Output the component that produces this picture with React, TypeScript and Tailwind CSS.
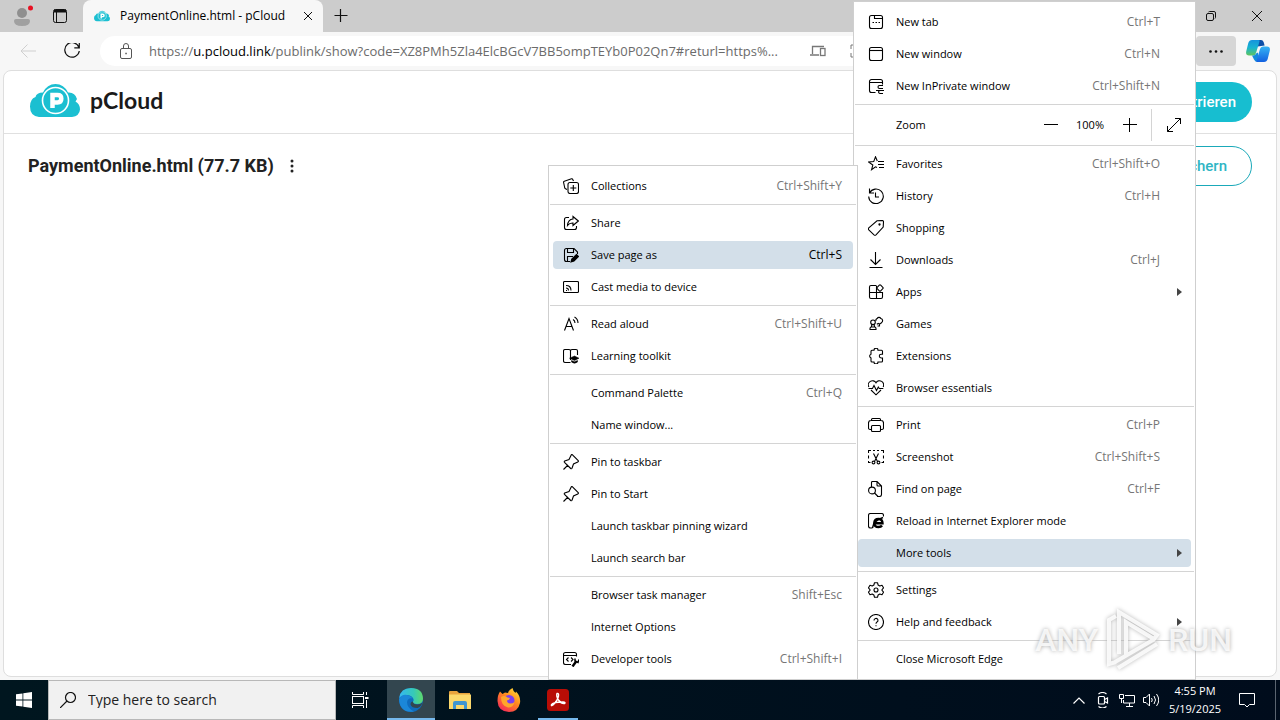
import type { ReactNode } from "react";

const ICONS: Record<string, ReactNode> = {
  newTab: (
    <>
      <rect x="1.5" y="1.5" width="13" height="13" rx="2" />
      <path d="M6.5 2v2.5h8M4.5 8.5h1.5M7.5 8.5h1.5M10.5 8.5h1.5" />
    </>
  ),
  newWindow: (
    <>
      <rect x="1.5" y="1.5" width="13" height="13" rx="2" />
      <path d="M2 4.5h12" />
    </>
  ),
  inPrivate: (
    <>
      <path d="M7.5 14.5h-4a2 2 0 0 1-2-2v-9a2 2 0 0 1 2-2h9a2 2 0 0 1 2 2v3M2 4.5h12" />
      <path d="M15 7.5h-3.500q-1.500 0-1.500 1.500t1.500 1.500H15M8 12.500h8M16 12.500h-3.500q-2 0-2 1.500t2 1.500H15" />
    </>
  ),
  favorites: (
    <>
      <path d="M9 11.500 7.500 10.800 3.600 13.700 4.800 9.100 .5 6l5.200-.4L7.500 .8 9.300 5" />
      <path d="M10 5.500h6M10 8.500h6M11 11.500h5" />
    </>
  ),
  history: (
    <path d="M1.500.5v4.500h4.500M1.500 5A7.300 7.300 0 1 1 .7 8.500M7.500 4.500v4.500H11" />
  ),
  shopping: (
    <>
      <path d="M9 .8 14.200.500q1.300 0 1.300 1.300l-.3 5.200L8 14.800q-1 .9-2 0L.8 9.800q-.9-1 0-2z" />
      <circle cx="11.500" cy="4.500" r=".6" />
    </>
  ),
  downloads: <path d="M7.500 0v12.500M2.500 7.500l5 5 5-5M1.500 15.500h13" />,
  apps: (
    <>
      <path d="M8 1.500H3q-1.500 0-1.500 1.500v10q0 1.500 1.500 1.500h10q1.500 0 1.500-1.500V8.500h-13M8.500 1.500v13" />
      <rect x="9.500" y="1.500" width="5" height="5" rx="1" fill="#fff" transform="rotate(45 12 4)" />
    </>
  ),
  games: (
    <>
      <circle cx="5" cy="6.300" r="2.300" />
      <path d="M4 8.500 3.300 11M6 8.500 6.700 11M2 13.500v-1q0-1.500 1.500-1.500h3Q8 11 8 12.500v1zM8 5a2 2 0 0 1 1.200-2.500 2 2 0 0 1 3.600 0 2.200 2.200 0 0 1 .5 4.200 2 2 0 0 1-3 .8l-1.500.8M11.500 7.500v2.500H9.500" />
    </>
  ),
  extensions: (
    <path d="M6 2.200a2 2 0 0 1 4 0h3.500q1 0 1 1v3h-1.300a1.900 1.900 0 0 0 0 3.800h1.300v3q0 1-1 1H10a2 2 0 0 1-4 0H4q-1 0-1-1v-3a2 2 0 0 1 0-3.800v-3q0-1 1-1z" />
  ),
  essentials: (
    <>
      <path d="M.9 7A3.900 3.900 0 0 1 8 2.800 3.900 3.900 0 0 1 15.100 7M3 10 8 14.800l5-4.800" />
      <path d="M.5 8.500h4l1.500-3 2.500 5 1.800-3.500 1 1.500h4" />
    </>
  ),
  print: (
    <>
      <path d="M3.500 3.500v-1q0-1 1-1h7q1 0 1 1v1M3.500 12.500H2q-1.500 0-1.500-1.500V6Q.5 3.500 3 3.500h10q2.500 0 2.500 2.500v5q0 1.500-1.500 1.500h-1.500" />
      <rect x="3.500" y="8.500" width="9" height="6" rx="1" />
    </>
  ),
  screenshot: (
    <>
      <path d="M2.500 13.500H.5V12M.5 9.500v-3M.5 4V1.500H3M5 1.500h2M9 1.500h2M13 1.500h2.500V4M15.500 6.500v3M15.500 12v1.500H13.500" />
      <path d="m5.500 4.500 4 8M10.500 4.500l-4 8" />
      <circle cx="5.500" cy="13.500" r="1.400" />
      <circle cx="10.500" cy="13.500" r="1.400" />
    </>
  ),
  find: (
    <>
      <path d="M3.500 6V1.500q0-1 1-1H9l4.500 4.500v8.500q0 2-2 2H9M9 .5V4q0 1 1 1h3.500" />
      <circle cx="4" cy="9.500" r="3.400" />
      <path d="M6.500 12 10 15.500" />
    </>
  ),
  ie: (
    <>
      <path d="M4.500 15H2.500q-2 0-2-2V2.500q0-2 2-2h11q2 0 2 2v1" />
      <path strokeWidth="2.400" d="M6 10.300h8.500q0-4.300-4-4.300t-4.300 4.300q.3 3.700 4.300 3.700 2.500 0 3.500-1.500" />
      <path strokeWidth="1.500" d="M4.500 15Q5 8 15 4.500" />
    </>
  ),
  settings: (
    <>
      <path
        strokeLinejoin="round"
        d="m6.500.7 3 0 .6 2.300 1.700 1 2.200-.7 1.500 2.500L13.800 8l1.700 2.200-1.500 2.500-2.200-.7-1.700 1-.6 2.300h-3l-.6-2.300-1.700-1-2.200.7L.5 10.200 2.200 8 .5 5.800l1.500-2.500 2.200.7 1.700-1z"
      />
      <circle cx="8" cy="8" r="2" />
    </>
  ),
  help: (
    <>
      <circle cx="8" cy="8" r="7.500" />
      <path d="M6 6.500a2 2 0 1 1 3 1.600q-1 .6-1 1.700M8 11.200v1" />
    </>
  ),
  collections: (
    <>
      <path d="M4 11.500 2.500 10.700q-1-.4-.9-1.500L.6 4.500q-.2-1 .7-1.300L8.500.8q1-.2 1.300.7l.7 1.500" />
      <rect x="5" y="4.500" width="10.500" height="11" rx="2" />
      <path d="M10.300 7v6M7.300 10h6" />
    </>
  ),
  share: (
    <>
      <path d="M6 2.500H3.500q-2 0-2 2v8q0 2 2 2h8q2 0 2-2V11" />
      <path d="M10 1.500 15.300 6 10 10.500V8Q6.500 7.800 4.500 10.500 5 4.300 10 4z" />
    </>
  ),
  save: (
    <>
      <path d="M7 14.500H3.500q-2 0-2-2v-9q0-2 2-2H11L14.500 5v2M4.500 2v3.500h6V2M4.500 14V9.500h5.500" />
      <path fill="currentColor" d="m8 15 .8-3L13.500 7.500l2 2L11 14z" />
    </>
  ),
  cast: (
    <>
      <rect x=".5" y="2.500" width="15" height="11" rx="1" />
      <path d="M3 11.500h1M3 9q2.500 0 2.500 2.500M3 6.500q5 0 5 5" />
    </>
  ),
  readAloud: (
    <path d="m1.500 14.500 4.500-12 4.500 12M3 10.500h6M10 3.500q2 1 2 3.500M11.500 1q3.500 2 3.500 6" />
  ),
  learning: (
    <>
      <path d="M7.500 2.500V12M7.500 14.500h-5q-2 0-2-1.500V3q0-1.500 1.500-1.500H6Q7.500 1.500 7.500 3 7.500 1.500 9 1.500h4q1.500 0 1.500 1.500v4" />
      <path fill="currentColor" strokeWidth=".5" d="m6.500 10.200 5-2.200 4.500 2.200-4.500 2.200zM8.500 12.500l3 1.200 3-1.200v1.500q-3 2.500-6 0z" />
    </>
  ),
  pin: (
    <path d="m.5 15.500 4.500-4.500M9.500 .8 15.200 6.500q.6.900-.4 1.400L10.500 10 9 14.300q-.5.800-1.300.2L1.500 8.300q-.6-.8.200-1.300L6 5.500 8.100 1.200q.5-1 1.400-.4z" />
  ),
  devTools: (
    <>
      <path d="M8 13.500H2.500q-2 0-2-2v-8q0-2 2-2h9q2 0 2 2v2M.5 4.500h13M5.500 6.500 3.500 8.500l2 2M8 6.500l2 2-2 2" />
      <path strokeWidth="2.400" d="m9.500 15.500 4-5.500" />
      <path strokeWidth="1.500" d="M12 7.500v2.500l3 1.500 1-3" />
    </>
  ),
};

function Icon({ name }: { name?: string }) {
  return (
    <svg
      viewBox="0 0 16 16"
      className="size-4 shrink-0"
      fill="none"
      stroke="currentColor"
      strokeWidth="1.1"
    >
      {name ? ICONS[name] : null}
    </svg>
  );
}

type Item = {
  label: string;
  icon?: string;
  keys?: string;
  arrow?: boolean;
  active?: boolean;
};

const MAIN_TOP: Item[] = [
  { label: "New tab", icon: "newTab", keys: "Ctrl+T" },
  { label: "New window", icon: "newWindow", keys: "Ctrl+N" },
  { label: "New InPrivate window", icon: "inPrivate", keys: "Ctrl+Shift+N" },
];

const MAIN_GROUPS: Item[][] = [
  [
    { label: "Favorites", icon: "favorites", keys: "Ctrl+Shift+O" },
    { label: "History", icon: "history", keys: "Ctrl+H" },
    { label: "Shopping", icon: "shopping" },
    { label: "Downloads", icon: "downloads", keys: "Ctrl+J" },
    { label: "Apps", icon: "apps", arrow: true },
    { label: "Games", icon: "games" },
    { label: "Extensions", icon: "extensions" },
    { label: "Browser essentials", icon: "essentials" },
  ],
  [
    { label: "Print", icon: "print", keys: "Ctrl+P" },
    { label: "Screenshot", icon: "screenshot", keys: "Ctrl+Shift+S" },
    { label: "Find on page", icon: "find", keys: "Ctrl+F" },
    { label: "Reload in Internet Explorer mode", icon: "ie" },
    { label: "More tools", arrow: true, active: true },
  ],
  [
    { label: "Settings", icon: "settings" },
    { label: "Help and feedback", icon: "help", arrow: true },
  ],
  [{ label: "Close Microsoft Edge" }],
];

const TOOLS_GROUPS: Item[][] = [
  [{ label: "Collections", icon: "collections", keys: "Ctrl+Shift+Y" }],
  [
    { label: "Share", icon: "share" },
    { label: "Save page as", icon: "save", keys: "Ctrl+S", active: true },
    { label: "Cast media to device", icon: "cast" },
  ],
  [
    { label: "Read aloud", icon: "readAloud", keys: "Ctrl+Shift+U" },
    { label: "Learning toolkit", icon: "learning" },
  ],
  [{ label: "Command Palette", keys: "Ctrl+Q" }, { label: "Name window..." }],
  [
    { label: "Pin to taskbar", icon: "pin" },
    { label: "Pin to Start", icon: "pin" },
    { label: "Launch taskbar pinning wizard" },
    { label: "Launch search bar" },
  ],
  [
    { label: "Browser task manager", keys: "Shift+Esc" },
    { label: "Internet Options" },
    { label: "Developer tools", icon: "devTools", keys: "Ctrl+Shift+I" },
  ],
];

function Divider() {
  return <div className="mx-px my-0.5 h-px bg-[#d4d4d4]" />;
}

function MenuRow({ item, wide }: { item: Item; wide?: boolean }) {
  return (
    <div className="px-1 py-0.5">
      <button
        role="menuitem"
        className={`flex h-7 w-full items-center gap-3 rounded-sm pl-2.5 text-left ${
          item.active ? "bg-[#d3dfe9]" : ""
        } ${wide ? "pr-2" : "pr-[11px]"}`}
      >
        <Icon name={item.icon} />
        <span className="flex-1 text-[11px] whitespace-nowrap">{item.label}</span>
        {item.keys && (
          <span className={item.active ? "" : "text-[#767676]"}>{item.keys}</span>
        )}
        {wide && (
          <svg viewBox="0 0 11 8" className="h-2 w-[11px] shrink-0" fill="#444">
            {item.arrow && <path d="M5 0v8l5-4z" />}
          </svg>
        )}
      </button>
    </div>
  );
}

function Groups({ groups, wide }: { groups: Item[][]; wide?: boolean }) {
  return (
    <>
      {groups.map((group, i) => (
        <div key={group[0].label}>
          {i > 0 && <Divider />}
          {group.map((item) => (
            <MenuRow key={item.label} item={item} wide={wide} />
          ))}
        </div>
      ))}
    </>
  );
}

function MainMenu() {
  return (
    <div
      role="menu"
      className="absolute top-px right-[84px] w-[343px] border border-[#cfcfcf] bg-white py-1"
    >
      {MAIN_TOP.map((item) => (
        <MenuRow key={item.label} item={item} wide />
      ))}
      <Divider />
      <div className="flex h-9 items-center pl-[42px] text-[11px]">
        <span className="flex-1">Zoom</span>
        <button aria-label="Zoom out" className="flex w-10 justify-center">
          <svg viewBox="0 0 14 14" className="size-3.5" stroke="#000">
            <path d="M0 6.500h14" />
          </svg>
        </button>
        <span className="w-[38px] text-center">100%</span>
        <button aria-label="Zoom in" className="flex w-[42px] justify-center">
          <svg viewBox="0 0 14 14" className="size-3.5" stroke="#000">
            <path d="M0 6.500h14M6.500 0v14" />
          </svg>
        </button>
        <button
          aria-label="Full screen"
          className="flex h-8 w-11 items-center justify-center border-l border-[#d4d4d4]"
        >
          <svg viewBox="0 0 14 14" className="size-3.5" fill="none" stroke="#000">
            <path d="M.5 13.500 13.500.5M8 .5h5.500V6M.5 8v5.500H6" />
          </svg>
        </button>
      </div>
      <Divider />
      <Groups groups={MAIN_GROUPS} wide />
    </div>
  );
}

function ToolsMenu() {
  return (
    <div
      role="menu"
      className="absolute top-[165px] right-[422px] w-[310px] border border-[#cfcfcf] bg-white py-1"
    >
      <Groups groups={TOOLS_GROUPS} />
    </div>
  );
}

function CloudLogo({ className }: { className: string }) {
  return (
    <svg viewBox="0 0 50 33" className={className} fill="none">
      <path
        fill="#1bbfd1"
        d="M9 33Q0 32 0 22.500 0 15 5.500 13 6.500 8.500 13 8.500 17 0 25.500 0T38 8.500q7-.5 9 6.500l-1.500 2.500Q50 20 50 25.500 49.500 32 42 33z"
      />
      <circle cx="25.500" cy="16.500" r="13" stroke="#fff" strokeWidth="1.600" />
      <path stroke="#fff" strokeWidth="4.500" d="M22.500 24V11h5q3.800 0 3.800 3.700t-3.800 3.700h-5" />
    </svg>
  );
}

function TabStrip() {
  return (
    <div className="flex h-8 items-stretch bg-[#ccc]">
      <div className="flex w-[83px] items-center">
        <button aria-label="Profile" className="flex w-11 justify-center">
          <svg viewBox="0 0 22 22" className="size-[22px]">
            <circle cx="11" cy="8" r="5" fill="#8f8f8f" />
            <path fill="#a0a0a0" d="M3 16q0-2 2-2h12q2 0 2 2 0 5-8 5t-8-5z" />
            <circle cx="19.500" cy="3" r="2.500" fill="#e81123" />
          </svg>
        </button>
        <button aria-label="Tab actions" className="flex w-8 justify-center">
          <svg viewBox="0 0 14 14" className="size-3.5" fill="none" stroke="#111">
            <rect x=".5" y=".5" width="13" height="13" rx="2" />
            <path strokeWidth="3" d="M1 2h12" />
            <path d="M3.500 2v11" />
          </svg>
        </button>
      </div>
      <div className="flex w-60 items-center gap-2.5 rounded-t-lg bg-[#f7f7f7] pr-2.5 pl-[11px]">
        <CloudLogo className="h-3 w-4" />
        <span className="flex-1 whitespace-nowrap">PaymentOnline.html - pCloud</span>
        <button aria-label="Close tab">
          <svg viewBox="0 0 10 10" className="size-2.5" stroke="#111">
            <path d="m1 1 8 8M9 1 1 9" />
          </svg>
        </button>
      </div>
      <button aria-label="New tab" className="flex w-9 items-center justify-center">
        <svg viewBox="0 0 14 14" className="size-3.5" stroke="#111" strokeWidth="1.200">
          <path d="M.5 6.500h13M6.500 0v13" />
        </svg>
      </button>
      <div className="flex-1" />
      <button aria-label="Restore" className="flex w-[46px] items-center justify-center">
        <svg viewBox="0 0 10 10" className="size-2.5" fill="none" stroke="#111">
          <rect x=".5" y="2.500" width="7" height="7" rx="1.500" />
          <path d="M2.500 1q.5-.5 1-.5H8q1.500 0 1.500 1.500v4.500q0 .5-.5 1" />
        </svg>
      </button>
      <button aria-label="Close window" className="flex w-[46px] items-center justify-center">
        <svg viewBox="0 0 10 10" className="size-2.5" stroke="#111">
          <path d="m0 0 10 10M10 0 0 10" />
        </svg>
      </button>
    </div>
  );
}

function Toolbar() {
  return (
    <div className="flex h-[38px] items-center">
      <button aria-label="Back" className="flex w-14 justify-center">
        <svg viewBox="0 0 16 14" className="h-3.5 w-4" fill="none" stroke="#cfcfcf">
          <path d="M16 7H1M7.500.5 1 7l6.500 6.500" />
        </svg>
      </button>
      <button aria-label="Refresh" className="flex w-8 justify-center">
        <svg viewBox="0 0 16 16" className="size-4" fill="none" stroke="#111" strokeWidth="1.200">
          <path d="M15 4.500A7.300 7.300 0 1 0 15.300 8M15.300 0v4.800h-5" />
        </svg>
      </button>
      <div className="ml-3 flex h-[30px] flex-1 items-center rounded-full bg-white pl-[19px]">
        <svg viewBox="0 0 14 16" className="h-4 w-3.5" fill="none" stroke="#555">
          <rect x="1.500" y="5.500" width="11" height="10" rx="1.500" />
          <path d="M4.500 5.500V3q0-2.500 2.500-2.500T9.500 3v2.500" />
          <path strokeWidth="1.500" d="M6.300 10.500h1.500" />
        </svg>
        <div className="relative ml-4 flex h-full w-[661px] items-center">
          <input id="address" type="text" className="h-full w-full bg-transparent outline-none" />
          <label
            htmlFor="address"
            className="absolute left-0 cursor-text text-[13px] whitespace-nowrap text-[#6b6b6b]"
          >
            https://<span className="text-black">u.pcloud.link</span>
            /publink/show?code=XZ8PMh5Zla4ElcBGcV7BB5ompTEYb0P02Qn7#returl=https%...
          </label>
        </div>
        <svg viewBox="0 0 16 12" className="h-3 w-4" fill="none" stroke="#777" strokeWidth="1.300">
          <path d="M2.500 9V1.500H14M0 10h9" />
          <rect x="10.500" y="3.500" width="4.500" height="7" />
        </svg>
        <svg viewBox="0 0 14 14" className="ml-6 size-3.5" fill="none" stroke="#777">
          <path d="M1 5V1h4M9 1h4v4M1 9v4h4M9 13h4V9" />
        </svg>
      </div>
      <div className="flex w-[84px] items-center">
        <button
          aria-label="Settings and more"
          className="flex h-[30px] w-10 items-center justify-center rounded-sm bg-[#d6d6d6]"
        >
          <svg viewBox="0 0 14 3" className="h-[3px] w-3.5" fill="#111">
            <circle cx="1.500" cy="1.500" r="1.300" />
            <circle cx="7" cy="1.500" r="1.300" />
            <circle cx="12.500" cy="1.500" r="1.300" />
          </svg>
        </button>
        <button aria-label="Copilot" className="flex w-11 justify-center">
          <svg viewBox="0 0 24 22" className="h-[22px] w-6">
            <defs>
              <linearGradient id="cpA" x1="0" y1="0" x2="0" y2="1">
                <stop offset="0" stopColor="#1593dd" />
                <stop offset=".5" stopColor="#18b4d0" />
                <stop offset="1" stopColor="#5fc55e" />
              </linearGradient>
              <linearGradient id="cpB" x1="0" y1="0" x2="0" y2="1">
                <stop offset="0" stopColor="#35b4f4" />
                <stop offset="1" stopColor="#1260e0" />
              </linearGradient>
            </defs>
            <path fill="#0c4fa8" d="M9 0h6q2 0 2.600 2l1 3.500-7 1z" />
            <path fill="url(#cpA)" d="M6 0h6.500q1.500 0 1 1.500L10 13q-.7 2.500-3 2.500H3q-3.500 0-2.800-4L2.300 3Q3.200 0 6 0z" />
            <path fill="#148bdc" d="M6 15.500h1q2.500 0 3-2l2-1v9.500q-3 0-4-2.500z" />
            <path fill="url(#cpB)" d="M18 22h-6.500q-1.500 0-1-1.500L14 9q.7-2.500 3-2.500h4q3.500 0 2.800 4L21.700 19q-.9 3-3.700 3z" />
          </svg>
        </button>
      </div>
    </div>
  );
}

function SharedPage() {
  return (
    <main className="mx-[3px] mb-[3px] flex-1 rounded-lg border border-[#dedede] bg-white font-[Roboto,sans-serif]">
      <header className="flex h-[63px] items-center justify-between border-b border-[#e0e0e0] px-6">
        <a href="#" className="flex items-center gap-2.5 pb-1 pl-0.5">
          <CloudLogo className="h-[33px] w-[50px]" />
          <span className="font-[Lato,sans-serif] text-[23px] font-bold text-[#1a1a1a]">
            pCloud
          </span>
        </a>
        <button className="h-10 rounded-full bg-[#17bed0] px-4 text-[15px] font-medium text-white">
          Registrieren
        </button>
      </header>
      <div className="flex items-start justify-between px-6 pt-3">
        <div className="flex h-10 items-center gap-4">
          <h1 className="text-[18px] font-bold text-[#222]">PaymentOnline.html (77.7 KB)</h1>
          <button aria-label="More options">
            <svg viewBox="0 0 4 14" className="h-3.5 w-1" fill="#222">
              <circle cx="2" cy="2" r="1.500" />
              <circle cx="2" cy="7" r="1.500" />
              <circle cx="2" cy="12" r="1.500" />
            </svg>
          </button>
        </div>
        <button className="h-10 rounded-full border border-[#1aa9b9] px-6 text-[15px] font-medium text-[#2fb5c4]">
          Speichern
        </button>
      </div>
    </main>
  );
}

function Taskbar() {
  return (
    <footer className="flex h-10 shrink-0 items-stretch bg-linear-to-r from-[#00161f] to-[#000c1c] text-white">
      <button aria-label="Start" className="flex w-12 items-center justify-center">
        <svg viewBox="0 0 16 16" className="size-4" fill="#fff">
          <path d="M0 2.300 6.500 1.400v6.200H0zM7.300 1.300 16 0v7.600H7.300zM0 8.400h6.500v6.200L0 13.700zM7.300 8.400H16V16l-8.700-1.300z" />
        </svg>
      </button>
      <div className="flex w-72 items-center gap-3 border border-[#b8b8b8] bg-[#f1f1f1] pl-[11px]">
        <svg viewBox="0 0 16 16" className="size-4" fill="none" stroke="#111" strokeWidth="1.200">
          <circle cx="10.500" cy="5.500" r="5" />
          <path d="M7 9 0 16" />
        </svg>
        <input
          type="text"
          aria-label="Search"
          placeholder="Type here to search"
          className="min-w-0 flex-1 text-[14px] outline-none placeholder:text-[#222]"
        />
      </div>
      <button aria-label="Task view" className="flex w-[51px] items-center justify-center pr-0.5">
        <svg viewBox="0 0 17 16" className="h-4 w-[17px]" fill="none" stroke="#fff">
          <path d="M.5 0v2.500h11V0M.5 16v-2.500h11V16M14.500 0v3M14.500 8v8" />
          <rect x=".5" y="4.500" width="11" height="7" />
          <path strokeWidth="2" d="M13 6h3.500" />
        </svg>
      </button>
      <button
        aria-label="Microsoft Edge"
        className="flex w-12 items-center justify-center border-b-2 border-[#76b9ed] bg-[#33464f] pt-0.5"
      >
        <svg viewBox="0 0 24 24" className="size-6">
          <defs>
            <linearGradient id="edgeA" x1="0" y1="0" x2="1" y2="0">
              <stop offset="0" stopColor="#35b8f1" />
              <stop offset=".6" stopColor="#36c9b8" />
              <stop offset="1" stopColor="#5fd96a" />
            </linearGradient>
          </defs>
          <circle cx="12" cy="12" r="12" fill="#0f6cbd" />
          <path
            fill="url(#edgeA)"
            d="M.2 10Q1.500 0 12 0q11.500 0 12 10.500 0 5.500-6 5.500-5 0-4-2.500 1-1 .5-2.500Q13 7.500 8.500 7 3 7 .2 10z"
          />
          <path fill="#1b87d8" d="M.1 11Q3 6 8 7q4 .5 5.500 3.500Q9 9.500 8 14q0 6 7 9.500-14 2-15-12.500z" />
          <path fill="#33464f" d="M14 13.500q0 3 4.500 3 3 0 5-2-1.500 4.500-5 5.500-6 0-7-3.500 0-3 2.500-3z" />
        </svg>
      </button>
      <button aria-label="File Explorer" className="flex w-[49px] items-center justify-center">
        <svg viewBox="0 0 22 18" className="h-[18px] w-[22px]">
          <path fill="#e8a33d" d="M0 1q0-1 1-1h7l2 2h11v4H0z" />
          <path fill="#fbd86c" d="M0 3.500h22V18H0z" />
          <path fill="#3f96d2" d="M4 18v-6q0-2 2-2h10q2 0 2 2v6h-3v-4H7v4z" />
        </svg>
      </button>
      <button aria-label="Firefox" className="flex w-[49px] items-center justify-center">
        <svg viewBox="0 0 24 24" className="size-6">
          <defs>
            <linearGradient id="ffA" x1=".9" y1="0" x2=".2" y2="1">
              <stop offset="0" stopColor="#ffe43a" />
              <stop offset=".45" stopColor="#ff8a1f" />
              <stop offset="1" stopColor="#f5245b" />
            </linearGradient>
          </defs>
          <path
            fill="url(#ffA)"
            d="M3 3.500 5.500 6 8 4.500l3 .5q1-3.500 4.500-5 .5 3 3 5l.5-1.500q5 5 4 11.500-2 9-11 9Q1 23.500.5 13 .5 7 3 3.500z"
          />
          <circle cx="12" cy="12.500" r="5.500" fill="#7a3ff0" />
          <path fill="#ffa62b" d="M4 9q3.500-2 6.500.5l2.500.5q-.5 2-3 2.500 0 2.500 3 3 3 0 4.500-1.500-1 5.500-6.500 5.500Q4 18 4 9z" />
        </svg>
      </button>
      <button aria-label="Acrobat" className="flex w-[49px] flex-col items-center justify-between pt-[9px]">
        <svg viewBox="0 0 22 22" className="size-[22px]" fill="none">
          <rect width="22" height="22" rx="3.500" fill="#b80d06" />
          <path
            stroke="#fff"
            strokeWidth="1.400"
            d="M10 4.500q2-.5 1.500 2.500-1 5-5.500 9-2 1.500-1.500-.3Q6 13 16 13q3 .3 1.500 1.500-3 .5-6-3.500-2.500-4-1.500-6.500z"
          />
        </svg>
        <span className="h-0.5 w-10 bg-[#76b9ed]" />
      </button>
      <div className="flex-1" />
      <div className="flex items-center gap-2">
        <button aria-label="Show hidden icons" className="flex w-4 justify-center">
          <svg viewBox="0 0 12 7" className="h-[7px] w-3" fill="none" stroke="#fff" strokeWidth="1.200">
            <path d="M.5 6.500 6 1l5.500 5.500" />
          </svg>
        </button>
        <svg viewBox="0 0 16 16" className="size-4" fill="none" stroke="#fff" strokeWidth="1.200">
          <rect x="3.500" y="4.500" width="6" height="7.500" rx="1" />
          <path d="m9.500 7.500 3-1.500v5l-3-1.500M3.500 2q4-3 8 0M3.500 14.500q4 3 8 0" />
        </svg>
        <svg viewBox="0 0 16 16" className="size-4" fill="none" stroke="#fff">
          <path d="M6 3.500h9.500v7.500H4.500V8M10.500 11v3M7 14.500h7M.5 2.500h4v4h-4zM2.500 6.500V11" />
        </svg>
        <svg viewBox="0 0 16 16" className="size-4" fill="none" stroke="#fff">
          <path d="M.5 5.500H3l3.500-3.500v12L3 10.500H.5zM8.500 6q1.500 2 0 4M11 4q3 4 0 8M13.500 2q4.500 6 0 12" />
        </svg>
      </div>
      <div className="flex w-[72px] flex-col justify-center text-center text-[11px] leading-[18px]">
        <span>4:55 PM</span>
        <span>5/19/2025</span>
      </div>
      <button aria-label="Notifications" className="flex w-8 items-center justify-center">
        <svg viewBox="0 0 16 16" className="size-4" fill="none" stroke="#fff">
          <path d="M.5 1.500h15v11h-5L8 15l-2.500-2.500h-5z" />
        </svg>
      </button>
      <div className="ml-3 w-[5px] border-l border-[#5a6470]" />
    </footer>
  );
}

function Watermark() {
  return (
    <div className="pointer-events-none absolute right-12 bottom-12 flex items-center gap-1.5 font-[Roboto,sans-serif] text-[32px] leading-none font-medium text-white/80 [text-shadow:0_0_4px_#aaa]">
      <span>ANY</span>
      <svg
        viewBox="0 0 58 64"
        className="h-16 w-[58px] drop-shadow-[0_0_2px_#aaa]"
        fill="none"
        stroke="#fff"
        strokeOpacity=".85"
        strokeWidth="4"
      >
        <path d="M12 8 5 12v44l7-2M15 46V4L53 27l-3 4-28-17v34M14 60 53 36M11 54l38-22" />
      </svg>
      <span>RUN</span>
    </div>
  );
}

export default function App() {
  return (
    <div className="relative flex h-screen flex-col overflow-hidden bg-[#f7f7f7] font-['Open_Sans',sans-serif] text-[12px] leading-4 text-black">
      <TabStrip />
      <Toolbar />
      <SharedPage />
      <Taskbar />
      <MainMenu />
      <ToolsMenu />
      <Watermark />
    </div>
  );
}
